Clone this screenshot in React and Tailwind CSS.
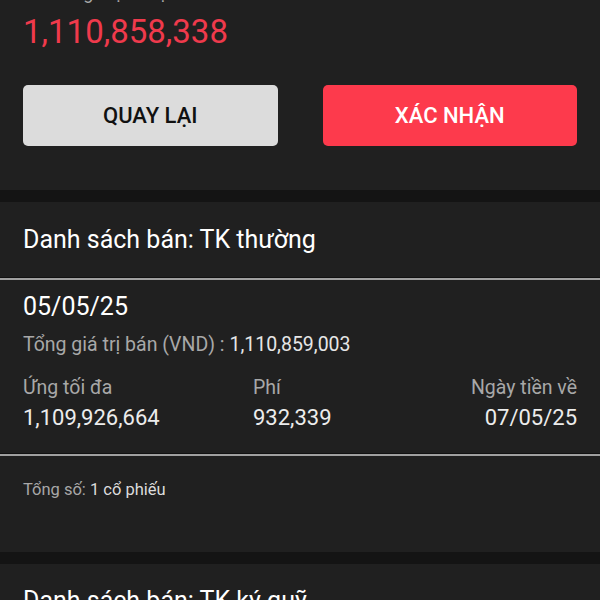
export default function App() {
  return (
    <div className="h-[600px] overflow-hidden bg-[#141414] flex flex-col gap-[12px] font-['Roboto',sans-serif]">
      <section className="bg-[#202020] px-[23px] h-[190px] shrink-0">
        <p className="text-[18px] leading-[20px] -mt-[17px] text-[#a8a8a8]">Tiền ứng thực nhận</p>
        <p className="text-[33px] leading-[40px] mt-[9px] text-[#ef3a4c]">1,110,858,338</p>
        <div className="grid grid-cols-2 gap-[45px] mt-[33px]">
          <button className="h-[61px] rounded-[5px] bg-[#dcdcdc] text-[#111] text-[22px] font-medium">QUAY LẠI</button>
          <button className="h-[61px] rounded-[5px] bg-[#fd3a4c] text-white text-[22px] font-medium">XÁC NHẬN</button>
        </div>
      </section>

      <section className="bg-[#202020] h-[350px] shrink-0 flex flex-col">
        <div className="h-[75px] px-[23px] flex items-center">
          <h2 className="text-[25px] text-white">Danh sách bán: TK thường</h2>
        </div>
        <div className="h-[1px] bg-[#111]" />
        <div className="h-[2px] bg-[#a0a0a0]" />
        <div className="px-[23px] pt-[12px] pb-[18px]">
          <p className="text-[25px] leading-[30px] text-white">05/05/25</p>
          <p className="text-[19.5px] leading-[24px] mt-[11px] text-[#a8a8a8]">
            Tổng giá trị bán (VND) : <span className="text-[#e6e6e6]">1,110,859,003</span>
          </p>
          <div className="grid grid-cols-[230px_1fr_auto] mt-[18px]">
            <div>
              <p className="text-[19.5px] leading-[26px] text-[#a8a8a8]">Ứng tối đa</p>
              <p className="text-[22px] leading-[34px] text-[#ececec]">1,109,926,664</p>
            </div>
            <div>
              <p className="text-[19.5px] leading-[26px] text-[#a8a8a8]">Phí</p>
              <p className="text-[22px] leading-[34px] text-[#ececec]">932,339</p>
            </div>
            <div className="text-right">
              <p className="text-[19.5px] leading-[26px] text-[#a8a8a8]">Ngày tiền về</p>
              <p className="text-[22px] leading-[34px] text-[#ececec]">07/05/25</p>
            </div>
          </div>
        </div>
        <div className="h-[1px] bg-[#111]" />
        <div className="h-[2px] bg-[#a0a0a0]" />
        <div className="px-[23px] pt-[24px]">
          <p className="text-[16.5px] leading-[20px] text-[#a8a8a8]">
            Tổng số: <span className="text-[#dcdcdc]">1 cổ phiếu</span>
          </p>
        </div>
      </section>

      <section className="bg-[#202020] flex-1 px-[23px] pt-[22px]">
        <h2 className="text-[25px] leading-[30px] text-white">Danh sách bán: TK ký quỹ</h2>
      </section>
    </div>
  );
}
